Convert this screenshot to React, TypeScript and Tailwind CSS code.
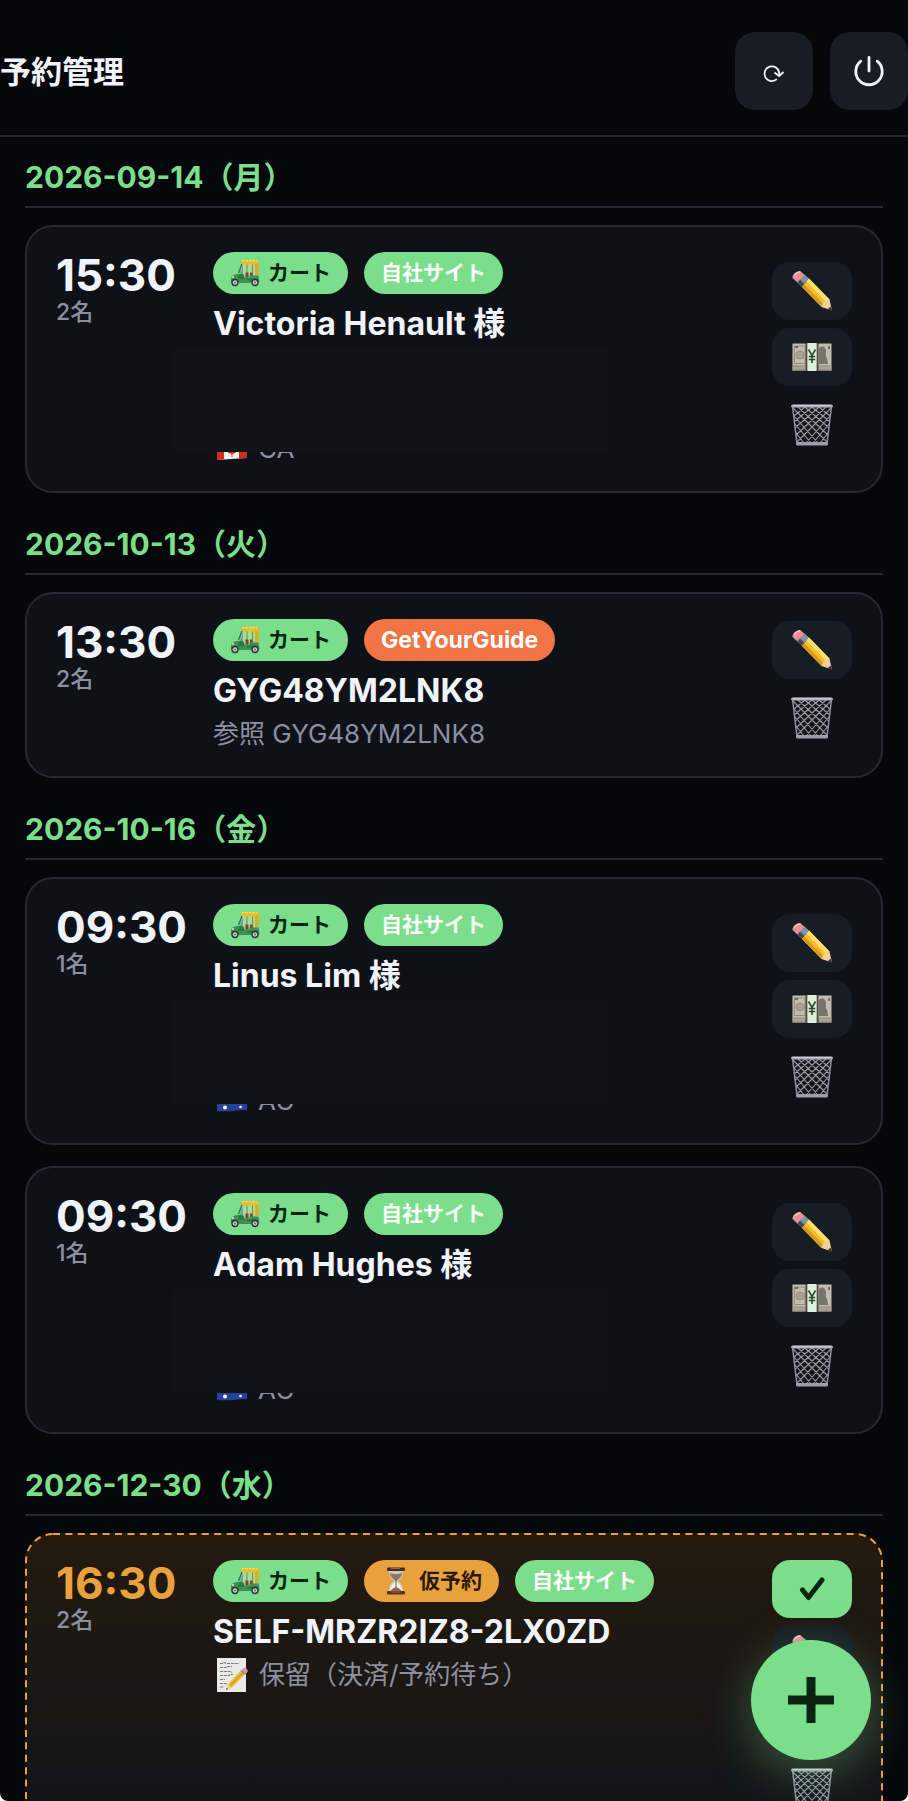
import type { ReactNode } from 'react';

type BadgeKind = 'cart' | 'hold' | 'site' | 'gyg';

type Booking = {
  time: string;
  guests: number;
  badges: BadgeKind[];
  name: string;
  note?: ReactNode;
  country?: 'CA' | 'AU';
  pending?: boolean;
};

const CartIcon = () => (
  <svg width="30" height="28" viewBox="0 0 30 28" className="shrink-0" aria-hidden="true">
    <path d="M12 4h15l1 2v10H11z" fill="#b9e6bd" opacity="0.5" />
    <path d="M11.500 2.500 14 1h13.500l1.500 2v2.500H11z" fill="#f0b92c" />
    <path d="M12 1.800h15" stroke="#ffd95a" strokeWidth="1.400" strokeDasharray="2.500 1" />
    <path d="M25 5h3.500v11H25z" fill="#e0aa28" />
    <path d="M12 5 8.500 14" stroke="#3f6f60" strokeWidth="1.400" />
    <path d="m13 6-3 8h3z" fill="#7d9aa5" />
    <path d="M17 5.500V18M22.500 5.500V18" stroke="#9b8a2c" strokeWidth="1.100" />
    <path d="M15.500 13.500h3v5h-3zM20 13.500h2.500v5H20z" fill="#8f3d2a" />
    <path d="M1 20c0-3 3-5 8-5l3.500-1 2 4.500h5v-2h9l1 6.500-3 1H4l-3-1z" fill="#3f9153" />
    <path d="m9 15.500 4-.500 1.500 5H8z" fill="#2c7a43" />
    <path d="M17 19.500h11v2H17z" fill="#2f7441" />
    <circle cx="5" cy="23.500" r="3.700" fill="#2b3430" />
    <circle cx="5" cy="23.500" r="2.300" fill="#c9cfcd" />
    <circle cx="25" cy="23.500" r="3.700" fill="#2b3430" />
    <circle cx="25" cy="23.500" r="2.300" fill="#c9cfcd" />
    <circle cx="5" cy="23.500" r="0.900" fill="#59605d" />
    <circle cx="25" cy="23.500" r="0.900" fill="#59605d" />
    <circle cx="3" cy="18" r="1" fill="#f1e7a3" />
  </svg>
);

const HourglassIcon = () => (
  <svg width="30" height="28" viewBox="0 0 30 28" className="shrink-0" aria-hidden="true">
    <path d="M8 3h14c0 6-1 8-5 11 4 3 5 5 5 11H8c0-6 1-8 5-11-4-3-5-5-5-11z" fill="#cfc7bd" />
    <path d="M9 6c2 1.500 10 1.500 12 0 0 3-2 5-5 7.500h-2C11 11 9 9 9 6z" fill="#8b7565" />
    <path d="M9 24c0-4 2-7 5-9h2c3 2 5 5 5 9z" fill="#eef0ef" />
    <path d="M9.500 24c1-2 3-3 5.500-4 2.500 1 4.500 2 5.500 4z" fill="#9a6741" />
    <path d="M15 12v8" stroke="#7b5a44" strokeWidth="1" />
    <rect x="6" y="0.500" width="18" height="3.500" rx="1.200" fill="#4a2a1e" />
    <rect x="6" y="24" width="18" height="3.500" rx="1.200" fill="#5a3423" />
    <path d="M10 1.500h9M10 25h9" stroke="#a37a63" strokeWidth="0.800" />
  </svg>
);

const PencilIcon = () => (
  <svg width="42" height="42" viewBox="0 0 42 42" aria-hidden="true">
    <path d="M1.500 8C0.500 5.500 6 0.500 9 1l5.500 4.500-7 8z" fill="#eb8f95" />
    <path d="M3 5.500C5 3 7 2 9.500 2" stroke="#f8bfc1" strokeWidth="1.500" fill="none" />
    <path d="m6.500 12.500 7-8 4.500 4-7 8.500z" fill="#7f93a8" />
    <path d="m6.500 12.500 2.500-3 4.500 4.500-2.500 3z" fill="#46484e" />
    <path d="m11 17 7-8.500 20.500 21L30.500 37z" fill="#f3bf2b" />
    <path d="m15.500 11.500 2.500-3 20.500 21-3 3z" fill="#ffdf6b" />
    <path d="m11 17 2.200-2.800 20 20.500-2.700 2.300z" fill="#d9991c" />
    <path d="m30.500 37 2-5.500 6-2 2.500 11z" fill="#f0cf9c" />
    <path d="m36.500 39.500 3-3L41.500 41z" fill="#33343a" />
  </svg>
);

const YenIcon = () => (
  <svg width="40" height="28" viewBox="0 0 40 28" aria-hidden="true">
    <rect x="0.500" y="0.500" width="39" height="27" fill="#c4bcad" />
    <rect x="0.500" y="22.500" width="39" height="5" fill="#8f887b" />
    <path d="M1 24.200h38M1 26h38" stroke="#d8d1c2" strokeWidth="0.600" />
    <rect x="2.500" y="3" width="10.500" height="17.500" fill="none" stroke="#958e80" />
    <circle cx="8" cy="12" r="4" fill="#aba394" stroke="#928b7d" />
    <path d="M27 5c3-3 7-1 7 3 0 3-1 4 1 7l1 6h-9z" fill="#77736c" />
    <path d="M36 3h2v3h-2zM3 3h3v2H3z" fill="#716b60" />
    <path d="M13.500 0h2v28h-2zM24.500 0h2v28h-2z" fill="#4a4a42" />
    <rect x="15.500" y="0" width="9" height="28" fill="#dcefd9" />
    <path d="m16.500 6.500 3.500 6 3.500-6M20 12.500V20M16.800 13.500h6.400M16.800 16.500h6.400" stroke="#2c4a2b" strokeWidth="1.600" fill="none" />
  </svg>
);

const TrashIcon = () => (
  <svg width="42" height="42" viewBox="0 0 42 42" aria-hidden="true">
    <path d="m1.500 2 4.500 38h30L40.500 2z" fill="#14161c" />
    <path
      d="m2 4 34 34M7 3l30 28M14 3l24 21M21 3l18 15M28 3l11 9M3 12l24 27M4 20l16 19M5 29l8 10M40 4 6 38M35 3 5 31M28 3 4 24M21 3 3 18M14 3 3 12M39 12 15 39M38 20 22 39M37 29l-8 10"
      stroke="#9a9da6"
      strokeWidth="1.100"
      fill="none"
    />
    <path d="m1.500 2 4.500 38M40.500 2 36 40" stroke="#8d9099" strokeWidth="1.500" />
    <rect x="0" y="0.500" width="42" height="3" rx="1.500" fill="#aeb1bb" />
    <path d="M2 1.300h38" stroke="#d9dbe2" strokeWidth="0.700" />
    <rect x="5" y="38" width="32" height="3.500" rx="1.500" fill="#9b9ea8" />
  </svg>
);

const MemoIcon = () => (
  <svg width="31" height="34" viewBox="0 0 31 34" className="shrink-0" aria-hidden="true">
    <rect x="0" y="0" width="29" height="34" fill="#e9e9e7" />
    <path
      d="M3 5.500h3l1-1 3 1h12M3 9.500h7l1-1h4M3 13.500h11l1 1M3 17.500h9l1-1h3M3 21.500h5M3 25.500h6l1 1M3 29h4"
      stroke="#77777a"
      strokeWidth="1.100"
      strokeDasharray="3 0.800"
      fill="none"
    />
    <path d="m9 32 2-6L24.500 12l4 4L15 29.500z" fill="#f0bd35" />
    <path d="m9 32 2-6 4 3.500z" fill="#ecd0a0" />
    <path d="m9 32 .7-2 1.300 1z" fill="#333333" />
    <path d="M13 28 26.500 14" stroke="#d2961f" strokeWidth="1.200" />
    <path d="m23.500 13 1.500-1.500 4 4-1.500 1.500z" fill="#8497a8" />
    <path d="m25 11.500 1.500-1.500c2-1 5 1.500 4 4L29 15.500z" fill="#ef8f98" />
  </svg>
);

const CanadaFlag = () => (
  <svg width="30" height="22" viewBox="0 0 30 22" className="shrink-0" aria-hidden="true">
    <path d="M0 1c8-3 14 3 30 0v19c-12 1-20 1-30 2z" fill="#f4f2f0" />
    <path d="M0 1q4-1.500 7-.800v21.300L0 22zM22 2q4 0 8-1v19l-8 .500z" fill="#d52b1e" />
    <path d="m14.500 5 1.500 3 2-.500-.500 4 3 0-2 3.500-3 1V19h-1v-3l-3-1-2-3.500h3l-.500-4 2 .500z" fill="#d52b1e" />
  </svg>
);

const AustraliaFlag = () => (
  <svg width="30" height="22" viewBox="0 0 30 22" className="shrink-0" aria-hidden="true">
    <path d="M0 1c8-3 14 3 30 0v19c-12 .500-20 2-30 1z" fill="#24429b" />
    <path d="m0 1 14 10M14 1 0 11M7 1v10M0 6h14" stroke="#e8e8ee" strokeWidth="1.500" />
    <circle cx="8" cy="17.500" r="2" fill="#ffffff" />
    <circle cx="23.500" cy="17" r="1.300" fill="#ffffff" />
    <circle cx="23.500" cy="5" r="1.200" fill="#ffffff" />
    <circle cx="19.500" cy="10" r="1.200" fill="#ffffff" />
    <circle cx="27" cy="9" r="1.200" fill="#ffffff" />
  </svg>
);

const flags = {
  CA: <CanadaFlag />,
  AU: <AustraliaFlag />,
};

const badgeStyles: Record<BadgeKind, { label: string; className: string; icon?: ReactNode }> = {
  cart: { label: 'カート', className: 'bg-[#7ade8b] text-[21px] text-[#0a2412]', icon: <CartIcon /> },
  hold: { label: '仮予約', className: 'bg-[#e8a13c] text-[21px] text-[#2a1a04]', icon: <HourglassIcon /> },
  site: { label: '自社サイト', className: 'bg-[#7ade8b] text-[21px] text-white' },
  gyg: { label: 'GetYourGuide', className: 'bg-[#f07444] text-[23px] text-white' },
};

const days: { date: string; bookings: Booking[] }[] = [
  {
    date: '2026-09-14（月）',
    bookings: [
      { time: '15:30', guests: 2, badges: ['cart', 'site'], name: 'Victoria Henault 様', country: 'CA' },
    ],
  },
  {
    date: '2026-10-13（火）',
    bookings: [
      { time: '13:30', guests: 2, badges: ['cart', 'gyg'], name: 'GYG48YM2LNK8', note: '参照 GYG48YM2LNK8' },
    ],
  },
  {
    date: '2026-10-16（金）',
    bookings: [
      { time: '09:30', guests: 1, badges: ['cart', 'site'], name: 'Linus Lim 様', country: 'AU' },
      { time: '09:30', guests: 1, badges: ['cart', 'site'], name: 'Adam Hughes 様', country: 'AU' },
    ],
  },
  {
    date: '2026-12-30（水）',
    bookings: [
      {
        time: '16:30',
        guests: 2,
        badges: ['cart', 'hold', 'site'],
        name: 'SELF-MRZR2IZ8-2LX0ZD',
        note: (
          <span className="flex items-center gap-[11px] pl-1">
            <MemoIcon />
            保留（決済/予約待ち）
          </span>
        ),
        pending: true,
      },
    ],
  },
];

const Badge = ({ kind }: { kind: BadgeKind }) => {
  const { label, className, icon } = badgeStyles[kind];
  return (
    <span className={`flex h-[42px] items-center gap-2 rounded-full px-[17px] font-bold whitespace-nowrap ${className}`}>
      {icon}
      {label}
    </span>
  );
};

const ActionButton = ({ label, className, children }: { label: string; className: string; children: ReactNode }) => (
  <button type="button" aria-label={label} className={`flex w-20 items-center justify-center rounded-[18px] ${className}`}>
    {children}
  </button>
);

const BookingCard = ({ booking }: { booking: Booking }) => {
  const { time, guests, badges, name, note, country, pending } = booking;
  return (
    <article
      className={`relative flex rounded-[28px] border-2 px-[29px] pt-6 pb-[22px] ${
        pending
          ? 'border-transparent bg-linear-to-b from-[#241a0e] to-[#101319] bg-origin-border'
          : 'border-[#262932] bg-[#0e1118]'
      }`}
    >
      {pending && (
        <svg className="pointer-events-none absolute -inset-0.5 size-[calc(100%+4px)]" aria-hidden="true">
          <rect
            x="1"
            y="1"
            rx="27"
            className="h-[calc(100%-2px)] w-[calc(100%-2px)]"
            fill="none"
            stroke="#e8a13c"
            strokeWidth="2"
            strokeDasharray="7 5.4"
          />
        </svg>
      )}

      <div className="w-[157px] shrink-0">
        <p className={`text-[44px] leading-[48px] font-bold ${pending ? 'text-[#e8a13c]' : 'text-[#f1f3fa]'}`}>{time}</p>
        <p className="text-[23px] leading-[26px] font-medium text-[#8b90a0]">{guests}名</p>
      </div>

      <div className="min-w-0 flex-1 pt-px">
        <div className="mb-[7px] flex flex-wrap gap-4">
          {badges.map((kind) => (
            <Badge key={kind} kind={kind} />
          ))}
        </div>
        <h3 className="text-[32px] leading-[45px] font-bold text-[#f1f3fa]">{name}</h3>
        {country && (
          <div className="relative h-[82px]">
            <div className="absolute top-[2px] -left-10 z-10 h-[104px] w-[436px] bg-[#10131a]" />
          </div>
        )}
        {country && (
          <p className="flex items-center gap-[11px] pl-1 text-[26px] leading-[41px] text-[#8b90a0]">
            {flags[country]}
            {country}
          </p>
        )}
        {note && <div className="text-[26px] leading-[41px] text-[#8b90a0]">{note}</div>}
      </div>

      <div className="flex shrink-0 flex-col justify-center gap-2 pt-px pb-[3px]">
        {pending && (
          <ActionButton label="確定" className="h-[58px] bg-[#7ade8b]">
            <svg width="26" height="26" viewBox="0 0 26 26" aria-hidden="true">
              <path d="m3.500 14 6 7.500L23 4" fill="none" stroke="#0a2412" strokeWidth="5" strokeLinecap="round" strokeLinejoin="round" />
            </svg>
          </ActionButton>
        )}
        <ActionButton label="編集" className="h-[58px] bg-[#161d25]">
          <PencilIcon />
        </ActionButton>
        {(country || pending) && (
          <ActionButton label="決済" className="h-[58px] bg-[#161d25]">
            <YenIcon />
          </ActionButton>
        )}
        <ActionButton label="削除" className="h-[62px]">
          <TrashIcon />
        </ActionButton>
      </div>
    </article>
  );
};

const App = () => {
  return (
    <div className="h-screen bg-white font-[Inter,'Noto_Sans_CJK_JP',sans-serif]">
      <div className="relative flex h-full flex-col overflow-hidden rounded-b-lg bg-[#05070a]">
        <header className="flex shrink-0 items-center justify-between border-b-2 border-[#262932] pt-8 pb-[25px]">
          <h1 className="pt-0.5 text-[31px] font-bold text-[#f1f3fa]">予約管理</h1>
          <div className="flex gap-[17px]">
            <button type="button" aria-label="更新" className="flex size-[78px] items-center justify-center rounded-[20px] bg-[#161d24]">
              <svg width="24" height="24" viewBox="0 0 24 24" className="mt-1" fill="none" stroke="#f1f3fa" strokeWidth="1.800" aria-hidden="true">
                <path d="M14.800 18.200A7.400 7.400 0 1 1 17.200 12v2" />
                <path d="m12.500 11.500 4.700 3.500 4.300-4" />
              </svg>
            </button>
            <button type="button" aria-label="ログアウト" className="flex size-[78px] items-center justify-center rounded-[20px] bg-[#161d24]">
              <svg width="32" height="32" viewBox="0 0 32 32" fill="none" stroke="#f1f3fa" strokeWidth="2.800" strokeLinecap="round" aria-hidden="true">
                <path d="M16 2.500v13.500" />
                <path d="M7.800 6.200a13.200 13.200 0 1 0 16.400 0" />
              </svg>
            </button>
          </div>
        </header>

        <main className="flex min-h-0 flex-1 flex-col gap-[31px] overflow-y-auto px-[25px] pt-5 [scrollbar-width:none]">
          {days.map((day) => (
            <section key={day.date} className="shrink-0">
              <h2 className="mb-[17px] border-b-2 border-[#262932] pb-[9px] text-[30px] leading-[40px] font-bold text-[#7ade8b]">
                {day.date}
              </h2>
              <div className="flex flex-col gap-[21px]">
                {day.bookings.map((booking) => (
                  <BookingCard key={booking.name} booking={booking} />
                ))}
              </div>
            </section>
          ))}
        </main>

        <button
          type="button"
          aria-label="予約を追加"
          className="absolute right-[37px] bottom-[41px] z-20 flex size-[120px] items-center justify-center rounded-full bg-[#7ade8b] shadow-[0_12px_48px_rgba(122,222,139,0.35)]"
        >
          <svg width="46" height="46" viewBox="0 0 46 46" aria-hidden="true">
            <path d="M23 0v46M0 23h46" stroke="#0a2412" strokeWidth="9" />
          </svg>
        </button>
      </div>
    </div>
  );
};

export default App;
